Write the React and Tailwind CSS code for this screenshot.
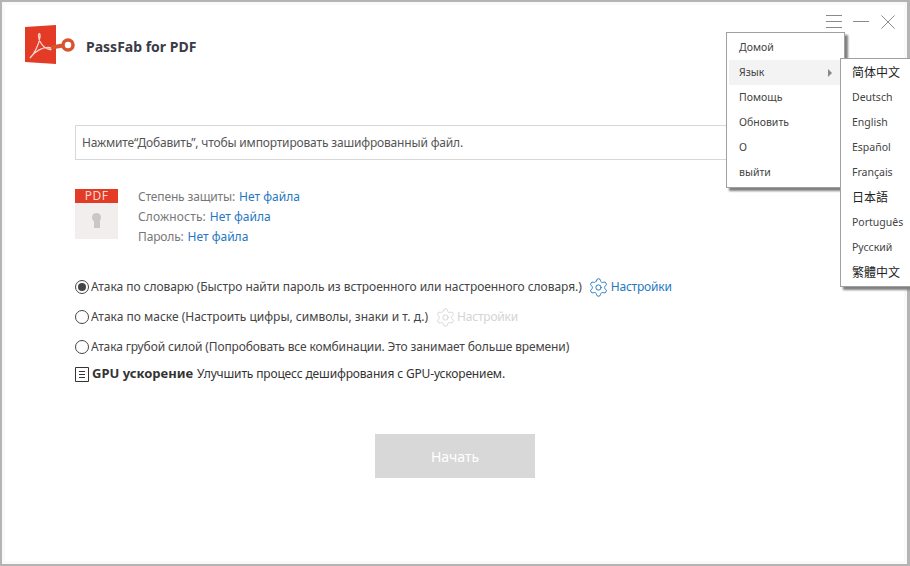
import { Settings } from "lucide-react";

const FONT = "font-['Noto_Sans','Liberation_Sans',sans-serif]";
const CJK = "font-['Noto_Sans_CJK_TC','Noto_Sans_CJK_SC',sans-serif]";

const menuItems = ["Домой", "Язык", "Помощь", "Обновить", "О", "выйти"];
const languages = [
  ["简体中文", true],
  ["Deutsch"],
  ["English"],
  ["Español"],
  ["Français"],
  ["日本語", true],
  ["Português"],
  ["Русский"],
  ["繁體中文", true],
];

function Logo() {
  return (
    <svg width="54" height="40" viewBox="0 0 54 40" className="shrink-0">
      <path d="M0 2 L31 0 V39 L0 37 Z" fill="#e33b26" />
      <path
        d="M5 33 C9 29 14 20 15 12 C15.500 8 13.500 7.500 13.500 11 C13.500 16 18 23 25 24.500 C27 25 27 22.500 24 22.500 C18 22 10 26 5 33 Z"
        fill="none"
        stroke="#f6d5cd"
        strokeWidth="1.300"
      />
      <path d="M26 22.500 L38 20.500" stroke="#d9532f" strokeWidth="4" />
      <circle cx="43" cy="20" r="5" fill="#fff" stroke="#d9532f" strokeWidth="3.500" />
    </svg>
  );
}

function Radio({ checked }) {
  return (
    <span className="flex h-[14px] w-[14px] shrink-0 items-center justify-center rounded-full border border-[#444] bg-white">
      {checked && <span className="h-[8px] w-[8px] rounded-full bg-[#444]" />}
    </span>
  );
}

function Stat({ label, labelClass }) {
  return (
    <div className="flex h-5 items-center gap-[4px]">
      <span className={`text-[#777] ${labelClass}`}>{label}</span>
      <span className="text-[#1f78c1]">Нет файла</span>
    </div>
  );
}

function AttackRow({ checked, children }) {
  return (
    <div className="flex h-[30px] items-center text-[#444]">
      <Radio checked={checked} />
      {children}
    </div>
  );
}

export default function App() {
  return (
    <div className="h-[566px] w-[910px] overflow-hidden">
      <div className={`${FONT} relative h-[566px] w-[910px] border-t-2 border-r-[3px] border-b-2 border-l-2 border-[#b4b4b4] bg-white text-[12px] shadow-[inset_0_0_0_3px_#f9f9f9]`}>
        <header className="flex h-[123px] items-start justify-between">
          <div className="ml-[23px] mt-[23px] flex items-center">
            <Logo />
            <span className="ml-[7px] mt-[2px] text-[14px] font-bold text-[#3b3b46]">PassFab for PDF</span>
          </div>
          <div className="mr-[12px] mt-[13px] flex items-center">
            <svg width="16" height="14" viewBox="0 0 16 14" stroke="#8a8a8a">
              <path d="M0 .5h16M0 6.500h16M0 12.500h16" />
            </svg>
            <svg width="16" height="14" viewBox="0 0 16 14" stroke="#8a8a8a" className="ml-[11px]">
              <path d="M0 6.500h16" />
            </svg>
            <svg width="14" height="14" viewBox="0 0 14 14" stroke="#8a8a8a" className="ml-[12px]">
              <path d="M.5.500l13 13M13.500.500l-13 13" />
            </svg>
          </div>
        </header>

        <main className="ml-[73px]">
          <div className="flex h-[35px] w-[770px] items-center border border-[#d8d8d8] pl-[6px] tracking-[-0.17px] text-[#555]">
            Нажмите“Добавить”, чтобы импортировать зашифрованный файл.
          </div>

          <section className="mt-[29px] flex">
            <div className="h-[50px] w-[43px] bg-[#f3eeee]">
              <div className="flex h-[14px] items-center justify-center bg-[#e33b26] text-[12px] leading-none tracking-[0.5px] text-[#f7d8d2]">
                PDF
              </div>
              <div className="mx-auto mt-[10px] flex w-[9px] flex-col items-center">
                <span className="h-[9px] w-[9px] rounded-full bg-[#c9c6c6]" />
                <span className="-mt-[2px] h-[8px] w-[6px] bg-[#c9c6c6]" />
              </div>
            </div>
            <div className="ml-5 mt-[-2px]">
              <Stat label="Степень защиты:" labelClass="tracking-[-0.15px]" />
              <Stat label="Сложность:" labelClass="tracking-[0.15px]" />
              <Stat label="Пароль:" labelClass="tracking-[-0.15px]" />
            </div>
          </section>

          <section className="mt-[25px]">
            <AttackRow checked>
              <span className="ml-[2px] tracking-[-0.05px]">Атака по словарю (Быстро найти пароль из встроенного или настроенного словаря.)</span>
              <Settings size={21} strokeWidth={1.1} color="#1f78c1" className="ml-[6px] mr-[-1px] shrink-0" />
              <span className="ml-[3px] tracking-[-0.2px] text-[#1f78c1]">Настройки</span>
            </AttackRow>
            <AttackRow>
              <span className="ml-[2px]">Атака по маске (Настроить цифры, символы, знаки и т. д.)</span>
              <Settings size={21} strokeWidth={1.1} color="#d4d4d4" className="ml-[7px] mr-[-1px] shrink-0" />
              <span className="ml-[2px] tracking-[-0.2px] text-[#d4d4d4]">Настройки</span>
            </AttackRow>
            <AttackRow>
              <span className="ml-[2px] tracking-[-0.13px]">Атака грубой силой (Попробовать все комбинации. Это занимает больше времени)</span>
            </AttackRow>
            <div className="mt-[2px] flex h-[20px] items-center text-[#333]">
              <svg width="14" height="15" viewBox="0 0 14 15" fill="none" stroke="#333" className="shrink-0">
                <path d="M.5.500h13v14H.5zM4 4.500h6M4 7.500h6M4 10.500h6" />
              </svg>
              <b className="ml-[3px] text-[13px]">GPU ускорение</b>
              <span className="ml-1 tracking-[-0.15px]">Улучшить процесс дешифрования с GPU-ускорением.</span>
            </div>
          </section>

          <div className="ml-[300px] mt-[50px] flex h-[44px] w-[160px] items-center justify-center bg-[#d8d8d8] text-[14px] text-white">
            Начать
          </div>
        </main>

        <div className="absolute left-[724px] top-[30px] z-10 w-[119px] border border-[#a0a0a0] bg-white p-[2px] text-[#444] shadow-[3px_3px_2px_#808080]">
          {menuItems.map((item) => (
            <div key={item} className={`flex h-[25px] items-center justify-between px-[10px] text-[10.5px] ${item === "Язык" ? "bg-[#f3f3f3]" : ""}`}>
              {item}
              {item === "Язык" && <span className="h-0 w-0 border-y-[4px] border-l-[4px] border-y-transparent border-l-[#888]" />}
            </div>
          ))}
        </div>

        <div className="absolute left-[838px] top-[56px] z-20 w-[72px] border border-[#a0a0a0] bg-white py-[1px] text-[#444] shadow-[3px_3px_2px_#808080]">
          {languages.map(([name, isCjk]) => (
            <div key={name} className={`flex h-[25px] items-center whitespace-nowrap pl-[11px] ${isCjk ? `${CJK} pb-[2px] text-[12px] text-[#222]` : "text-[10.5px]"}`}>
              {name}
            </div>
          ))}
        </div>
      </div>
    </div>
  );
}
